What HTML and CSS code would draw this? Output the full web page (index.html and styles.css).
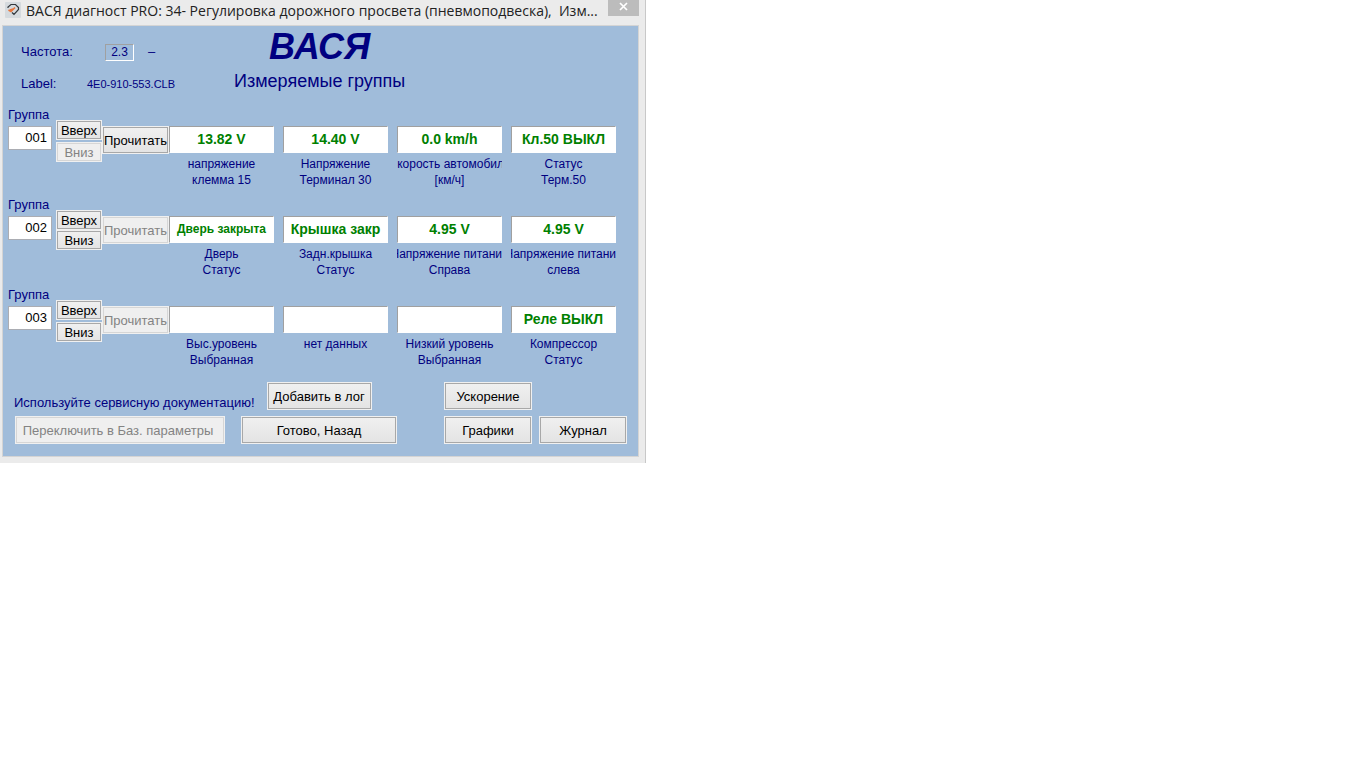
FILE: index.html
```
<!DOCTYPE html>
<html lang="ru">
<head>
  <meta charset="UTF-8" />
  <meta name="viewport" content="width=device-width, initial-scale=1.0" />
  <title>ВАСЯ диагност PRO</title>
  <link rel="stylesheet" href="styles.css">
</head>
<body>
  <div class="window">
    <div class="titlebar">
      <svg class="app-icon" width="16" height="16" viewBox="0 0 16 16">
        <rect width="16" height="16" rx="1" fill="#d5dade" />
        <path d="M3 6 V5 L6 2.5 H10.5 L13.5 5.5 V7.5 L9 12.5 L7 10.5" fill="none" stroke="#33383c" stroke-width="1.2" />
        <path d="M3.5 8 L6 9.5 L10 5.5 M5 8 L8 7" fill="none" stroke="#e8763c" stroke-width="1.6" />
      </svg>
      <div class="titlebar-text">ВАСЯ диагност PRO: 34- Регулировка дорожного просвета (пневмоподвеска),&nbsp; Изм...</div>
      <button class="close" aria-label="Закрыть">
        <svg width="9" height="9" viewBox="0 0 9 9"><path d="M1 1 L8 8 M8 1 L1 8" stroke="#fff" stroke-width="1.7" /></svg>
      </button>
    </div>

    <div class="panel">
      <div class="header">
        <div class="info">
          <span>Частота:</span>
          <div class="rate"><span class="rate-box">2.3</span><span>–</span></div>
          <span>Label:</span>
          <span class="label-file">4E0-910-553.CLB</span>
        </div>
        <div class="heading">
          <h1>ВАСЯ</h1>
          <h2>Измеряемые группы</h2>
        </div>
      </div>

      <div class="group">
        <div class="group-number">
          <label for="group1">Группа</label>
          <input type="text" id="group1" value="001">
        </div>
        <div class="spin">
          <button>Вверх</button>
          <button disabled>Вниз</button>
        </div>
        <button class="read">Прочитать</button>
        <div class="cells">
          <div class="cell">
            <div class="value">13.82 V</div>
            <div class="caption">напряжение</div>
            <div class="caption">клемма 15</div>
          </div>
          <div class="cell">
            <div class="value">14.40 V</div>
            <div class="caption">Напряжение</div>
            <div class="caption">Терминал 30</div>
          </div>
          <div class="cell">
            <div class="value">0.0 km/h</div>
            <div class="caption">Скорость автомобиля</div>
            <div class="caption">[км/ч]</div>
          </div>
          <div class="cell">
            <div class="value">Кл.50 ВЫКЛ</div>
            <div class="caption">Статус</div>
            <div class="caption">Терм.50</div>
          </div>
        </div>
      </div>

      <div class="group">
        <div class="group-number">
          <label for="group2">Группа</label>
          <input type="text" id="group2" value="002">
        </div>
        <div class="spin tight">
          <button>Вверх</button>
          <button>Вниз</button>
        </div>
        <button class="read" disabled>Прочитать</button>
        <div class="cells">
          <div class="cell">
            <div class="value small">Дверь закрыта</div>
            <div class="caption">Дверь</div>
            <div class="caption">Статус</div>
          </div>
          <div class="cell">
            <div class="value">Крышка закр</div>
            <div class="caption">Задн.крышка</div>
            <div class="caption">Статус</div>
          </div>
          <div class="cell">
            <div class="value">4.95 V</div>
            <div class="caption">Напряжение питания</div>
            <div class="caption">Справа</div>
          </div>
          <div class="cell">
            <div class="value">4.95 V</div>
            <div class="caption">Напряжение питания</div>
            <div class="caption">слева</div>
          </div>
        </div>
      </div>

      <div class="group">
        <div class="group-number">
          <label for="group3">Группа</label>
          <input type="text" id="group3" value="003">
        </div>
        <div class="spin">
          <button>Вверх</button>
          <button>Вниз</button>
        </div>
        <button class="read" disabled>Прочитать</button>
        <div class="cells">
          <div class="cell">
            <div class="value"></div>
            <div class="caption">Выс.уровень</div>
            <div class="caption">Выбранная</div>
          </div>
          <div class="cell">
            <div class="value"></div>
            <div class="caption">нет данных</div>
          </div>
          <div class="cell">
            <div class="value"></div>
            <div class="caption">Низкий уровень</div>
            <div class="caption">Выбранная</div>
          </div>
          <div class="cell">
            <div class="value">Реле ВЫКЛ</div>
            <div class="caption">Компрессор</div>
            <div class="caption">Статус</div>
          </div>
        </div>
      </div>

      <div class="footer">
        <div class="footer-left">
          <div class="note">Используйте сервисную документацию!</div>
          <button class="basic" disabled>Переключить в Баз. параметры</button>
        </div>
        <div class="footer-middle">
          <button class="log">Добавить в лог</button>
          <button class="done">Готово, Назад</button>
        </div>
        <div class="footer-right">
          <button class="turbo">Ускорение</button>
          <button>Графики</button>
          <button>Журнал</button>
        </div>
      </div>
    </div>
  </div>
</body>
</html>
```

FILE: styles.css
```
* {
  box-sizing: border-box;
}
body {
  margin: 0;
  background: #ffffff;
  font-family: "Liberation Sans", Arial, sans-serif;
  font-size: 13px;
  line-height: 16px;
  color: #000080;
}
.window {
  width: max-content;
  padding: 0 6px 6px 2px;
  background: #ebebeb;
  border-right: 1px solid #c8c8c8;
}
.titlebar {
  display: flex;
  align-items: flex-start;
  height: 25px;
}
.app-icon {
  margin: 2px 5px 0 3px;
}
.titlebar-text {
  flex: 1;
  font-family: "Open Sans", "Noto Sans", sans-serif;
  font-size: 14px;
  line-height: 22px;
  white-space: nowrap;
  color: #222222;
}
.close {
  display: flex;
  align-items: center;
  justify-content: center;
  width: 31px;
  height: 16px;
  padding: 0 0 3px;
  border: none;
  outline: none;
  background: #bcbcbc;
}
.panel {
  padding: 0 12px 13px 5px;
  background: #a0bcda;
  border: 1px solid #d4d4d4;
}

/* header */
.header {
  display: flex;
  height: 80px;
}
.info {
  display: grid;
  grid-template-columns: 66px 134px;
  grid-auto-rows: 32px;
  align-items: center;
  width: 226px;
  padding: 10px 0 0 13px;
}
.rate {
  display: flex;
  align-items: center;
  gap: 14px;
  padding-left: 18px;
}
.rate-box {
  width: 29px;
  height: 17px;
  font-size: 12px;
  line-height: 15px;
  text-align: center;
  border: 1px solid;
  border-color: #a0a0a0 #ffffff #ffffff #a0a0a0;
}
.label-file {
  font-size: 11px;
}
.heading {
  text-align: center;
}
h1 {
  margin: 0;
  font-size: 36px;
  font-style: italic;
  line-height: 42px;
}
h2 {
  margin: 0;
  font-size: 18px;
  font-weight: normal;
  line-height: 26px;
}

/* buttons and inputs */
button {
  padding: 1px 0 0;
  font: inherit;
  white-space: nowrap;
  color: #000000;
  background: linear-gradient(#f0f0f0, #e4e4e4);
  border: 1px solid #a8a8a8;
  outline: 1px solid #f0f0f0;
  outline-offset: 0;
}
button:disabled {
  color: #838383;
  background: #efefef;
  border-color: #d6d6d6;
}
input {
  width: 44px;
  height: 24px;
  padding: 0 4px 2px;
  font: inherit;
  text-align: right;
  color: #000000;
  background: #ffffff;
  border: 1px solid #abadb3;
}

/* measuring groups */
.group {
  display: flex;
  align-items: flex-start;
  height: 90px;
}
.group-number {
  display: flex;
  flex-direction: column;
  gap: 3px;
  width: 49px;
  padding-top: 1px;
}
.spin {
  display: flex;
  flex-direction: column;
  gap: 4px;
  margin-top: 15px;
}
.spin.tight {
  gap: 2px;
}
.spin button {
  width: 44px;
  height: 18px;
  line-height: 16px;
}
.read {
  width: 65px;
  height: 26px;
  margin: 21px 1px 0 2px;
}
.cells {
  display: flex;
  gap: 9px;
  margin-top: 20px;
}
.cell {
  width: 105px;
}
.value {
  height: 27px;
  margin-bottom: 3px;
  font-size: 14px;
  font-weight: bold;
  line-height: 25px;
  text-align: center;
  white-space: nowrap;
  color: #008000;
  background: #ffffff;
  border: 1px solid;
  border-color: #a0a0a0 #ffffff #ffffff #a0a0a0;
}
.value.small {
  font-size: 12px;
}
/* long captions are cut off on both sides */
.caption {
  display: flex;
  justify-content: center;
  overflow: hidden;
  white-space: nowrap;
  font-size: 12px;
}

/* footer */
.footer {
  display: flex;
  padding-top: 7px;
}
.footer button {
  height: 26px;
}
.footer-left,
.footer-middle {
  display: flex;
  flex-direction: column;
  gap: 8px;
}
.footer-left {
  width: 234px;
  padding-left: 6px;
}
.note {
  height: 26px;
  padding-top: 12px;
  white-space: nowrap;
}
.basic {
  width: 208px;
  margin-left: 2px;
  padding-right: 4px;
}
.footer-middle {
  align-items: center;
  width: 154px;
}
.log {
  width: 103px;
}
.done {
  width: 154px;
}
.footer-right {
  display: grid;
  grid-template-columns: 86px 86px;
  gap: 8px 9px;
  margin-left: 49px;
}
.turbo {
  grid-column: 1 / 3;
  width: 86px;
}
```
